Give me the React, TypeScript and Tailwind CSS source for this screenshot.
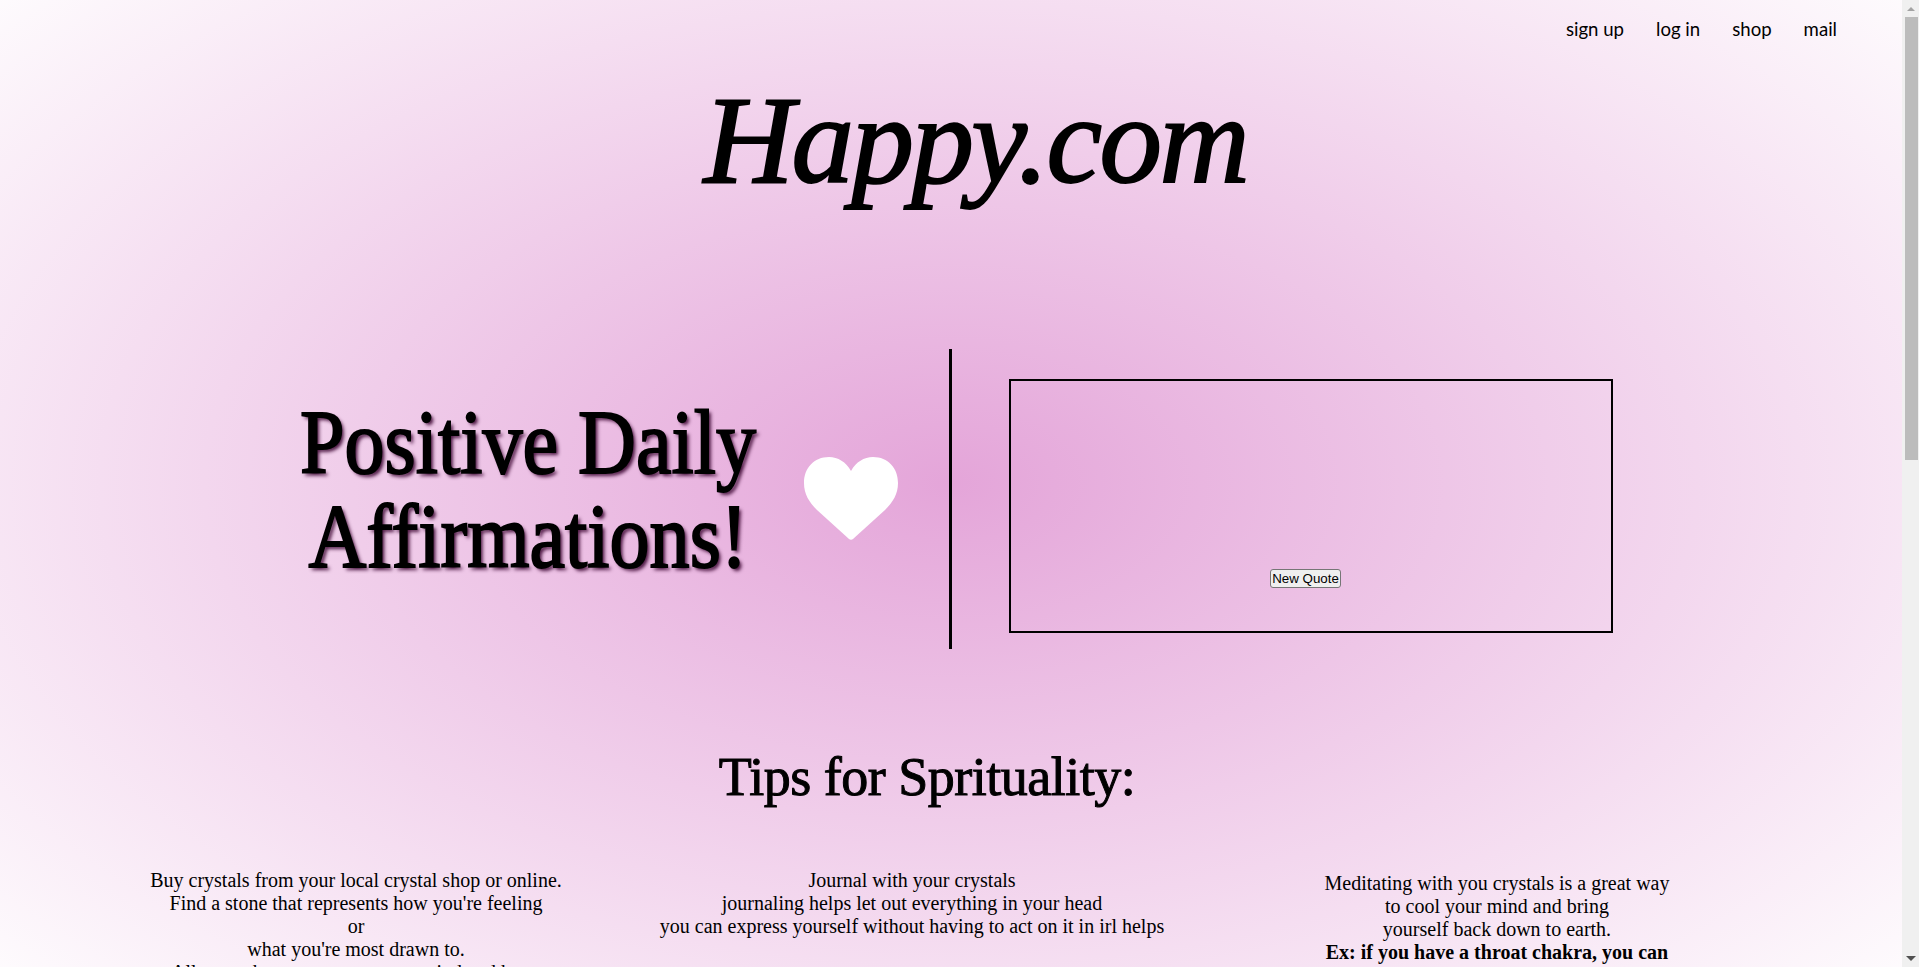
import React from 'react';

const serif = "font-['Liberation_Serif',serif]";

function Heart() {
  return (
    <svg width="94" height="83" viewBox="0 0 94 83" className="shrink-0">
      <path
        d="M47 14C42 5 34 0 25 0C10 0 0 11 0 26C0 37 5 45 13 53L45 82C46 83 48 83 49 82L81 53C89 45 94 37 94 26C94 11 84 0 69 0C60 0 52 5 47 14Z"
        fill="#ffffff"
      />
    </svg>
  );
}

function Scrollbar() {
  return (
    <div className="w-[17px] h-full shrink-0 flex flex-col bg-[#f0f0f0]">
      <div className="h-[17px] flex items-center justify-center">
        <div className="w-0 h-0 border-x-[4px] border-x-transparent border-b-[4px] border-b-[#a3a3a3]" />
      </div>
      <div className="h-[443px] bg-[#bcbcbc] w-[13px] ml-[3px]" />
      <div className="flex-1" />
      <div className="h-[17px] flex items-center justify-center">
        <div className="w-0 h-0 border-x-[5px] border-x-transparent border-t-[5px] border-t-[#505050]" />
      </div>
    </div>
  );
}

export default function App() {
  return (
    <div className={`h-screen flex overflow-hidden text-black ${serif}`}>
      <div className="flex-1 h-full overflow-hidden bg-[radial-gradient(ellipse_1345px_760px_at_951px_483px,#e4a5d9,#ffffff)]">
        <nav className="flex justify-end gap-8 pr-[65px] pt-[15px] h-[54px] font-['Lato',sans-serif] text-[18.6px] leading-[28px]">
          <a>sign up</a>
          <a>log in</a>
          <a>shop</a>
          <a>mail</a>
        </nav>

        <h1 className="mt-[15px] text-center pl-[49px] italic text-[125px] leading-[142px] tracking-[-2.5px] [-webkit-text-stroke:2px_black]">
          Happy.com
        </h1>

        <section className="flex mt-[138px] items-center h-[300px]">
          <div className="ml-[268px] w-[520px] -mt-[18px] scale-x-[0.89]">
            <h2 className="text-center whitespace-nowrap text-[90px] leading-[94px] font-normal [-webkit-text-stroke:2px_black] [text-shadow:3px_3px_4px_#4a1540]">
              Positive Daily
              <br />
              Affirmations!
            </h2>
          </div>
          <div className="ml-[16px] -mt-[2px]">
            <Heart />
          </div>
          <div className="ml-[51px] w-[3px] h-[300px] bg-black" />
          <div className="ml-[57px] mt-[14px] w-[604px] h-[254px] border-2 border-black flex flex-col items-center justify-end pb-[43px] pr-[11px]">
            <button className="w-[71px] h-[19px] text-[13.33px] leading-none font-['Liberation_Sans',sans-serif] bg-[#efefef] border border-[#767676] rounded-[3px]">
              New Quote
            </button>
          </div>
        </section>

        <h2 className="mt-[97px] text-center text-[54px] leading-[62px] tracking-[-0.5px] [-webkit-text-stroke:1px_black] -translate-x-[24px]">
          Tips for Sprituality:
        </h2>

        <div className="flex mt-[61px] text-[20px] leading-[23px] text-center">
          <div className="w-[500px] ml-[106px] shrink-0">
            Buy crystals from your local crystal shop or online.
            <br />
            Find a stone that represents how you're feeling
            <br />
            or
            <br />
            what you're most drawn to.
            <br />
            Allow each stone to open your mind and heart
          </div>
          <div className="w-[520px] ml-[46px] shrink-0">
            Journal with your crystals
            <br />
            journaling helps let out everything in your head
            <br />
            you can express yourself without having to act on it in irl helps
          </div>
          <div className="w-[400px] ml-[125px] shrink-0 pt-[3px]">
            Meditating with you crystals is a great way
            <br />
            to cool your mind and bring
            <br />
            yourself back down to earth.
            <br />
            <b>Ex: if you have a throat chakra, you can</b>
          </div>
        </div>
      </div>
      <Scrollbar />
    </div>
  );
}
